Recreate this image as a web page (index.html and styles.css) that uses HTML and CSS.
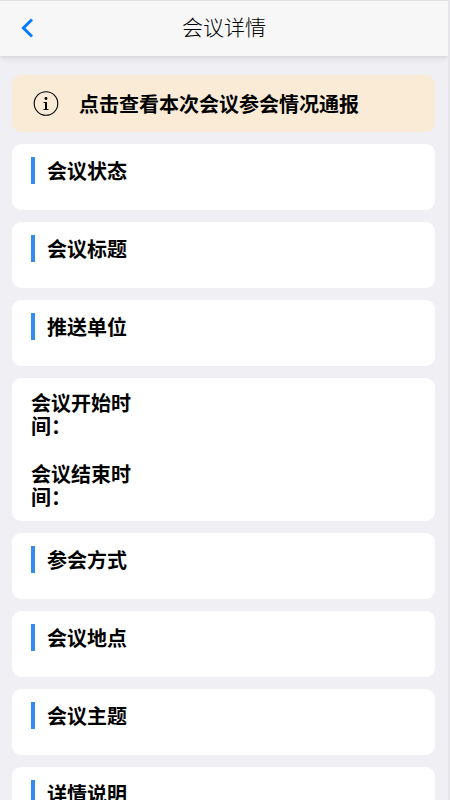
FILE: index.html
```html
<!DOCTYPE html>
<html lang="zh-CN">
<head>
<meta charset="utf-8">
<meta name="viewport" content="width=device-width, initial-scale=1">
<title>会议详情</title>
<link rel="stylesheet" href="styles.css">
</head>
<body>
<header class="navbar">
  <button class="back" type="button" aria-label="返回">
    <svg viewBox="0 0 12 20" width="12" height="20"><path d="M11 1.500 2.400 10l8.600 8.500" fill="none" stroke="currentColor" stroke-width="2.900"/></svg>
  </button>
  <h1 class="title">会议详情</h1>
</header>
<main class="content">
  <a class="notice" href="#report">
    <svg class="info" viewBox="0 0 26 26" width="26" height="26"><circle cx="13" cy="12.500" r="11.800" fill="none" stroke="currentColor" stroke-width="1.100"/><circle cx="13" cy="7.500" r="1.400" fill="currentColor"/><path d="M10.500 11.500h2.500M10.500 18.500h5" fill="none" stroke="currentColor"/><path d="M13 11v8" stroke="currentColor" stroke-width="2"/></svg>
    <span>点击查看本次会议参会情况通报</span>
  </a>
  <section class="card"><h2 class="label">会议状态</h2></section>
  <section class="card"><h2 class="label">会议标题</h2></section>
  <section class="card"><h2 class="label">推送单位</h2></section>
  <section class="card times">
    <h2 class="time">会议开始时间：</h2>
    <h2 class="time">会议结束时间：</h2>
  </section>
  <section class="card"><h2 class="label">参会方式</h2></section>
  <section class="card"><h2 class="label">会议地点</h2></section>
  <section class="card"><h2 class="label">会议主题</h2></section>
  <section class="card"><h2 class="label">详情说明</h2></section>
</main>
</body>
</html>
```
FILE: styles.css
```css
* {
  box-sizing: border-box;
}

html {
  background: #f3f3f5;
}

body {
  margin: 0;
  border-right: 2px solid #e6e6ea;
  background: #efeff4;
  color: #000;
  font-family: "Noto Sans CJK SC", sans-serif;
}

.navbar {
  position: sticky;
  top: 0;
  z-index: 1;
  display: grid;
  grid-template-columns: 56px 1fr 56px;
  align-items: start;
  height: 56px;
  border-top: 1px solid #e2e2e2;
  background: #f7f7f7;
  box-shadow: 0 1px 6px #ccc;
}

.back {
  display: flex;
  align-items: center;
  height: 54px;
  padding: 0 21px;
  border: 0;
  background: none;
  color: #007aff;
}

.back svg {
  flex: none;
}

.title {
  margin: 0;
  text-align: center;
  font-size: 21px;
  font-weight: 300;
  line-height: 50px;
}

.content {
  display: flex;
  flex-direction: column;
  gap: 12px;
  padding: 19px 13px 12px 12px;
}

.notice {
  display: flex;
  align-items: center;
  gap: 20px;
  height: 57px;
  padding: 0 21px;
  border-radius: 9px;
  background: #faebd7;
  color: #000;
  font-size: 20px;
  font-weight: 700;
  text-decoration: none;
}

.card {
  min-height: 66px;
  padding: 13px 19px;
  border-radius: 9px;
  background: #fff;
}

.label {
  margin: 0;
  padding-left: 12px;
  border-left: 4px solid #338cee;
  font-size: 20px;
  font-weight: 700;
  line-height: 27px;
}

.times {
  display: flex;
  flex-direction: column;
  gap: 25px;
}

.time {
  width: 112px;
  margin: 0;
  font-size: 20px;
  font-weight: 700;
  line-height: 23px;
}
```
